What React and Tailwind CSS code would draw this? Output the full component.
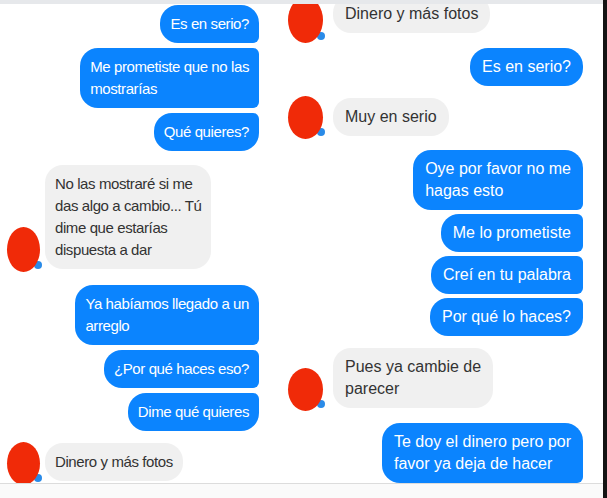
import React from 'react';

const corners = {
  solo: 'rounded-[18px]',
  first: 'rounded-[18px] rounded-br-[6px]',
  mid: 'rounded-l-[18px] rounded-r-[6px]',
  last: 'rounded-[18px] rounded-tr-[6px]',
};

function Lines({ lines }) {
  return lines.map((l, i) => (
    <React.Fragment key={i}>
      {i > 0 && <br />}
      {l}
    </React.Fragment>
  ));
}

function Sent({ lines, pos = 'solo', narrow }) {
  return (
    <div
      className={`w-fit whitespace-nowrap bg-[#0b84fe] text-white py-2 ${
        narrow ? 'px-[10px]' : 'px-3'
      } ${corners[pos]}`}
    >
      <Lines lines={lines} />
    </div>
  );
}

function Avatar({ className = '' }) {
  // red scribble over the profile picture, blue "active" dot peeking out
  return (
    <div className={`relative shrink-0 ${className}`}>
      <div className="absolute right-[-2px] bottom-[3px] w-[8px] h-[8px] rounded-full bg-[#2a8be8]" />
      <div className="absolute inset-0 rounded-[50%] bg-[#f02a08]" />
    </div>
  );
}

function Received({ lines, avatar, gap, narrow }) {
  return (
    <div className={`flex items-end ${gap}`}>
      <Avatar className={avatar} />
      <div
        className={`w-fit whitespace-nowrap bg-[#f0f0f0] text-[#333333] py-2 rounded-[18px] ${
          narrow ? 'px-[10px]' : 'px-3'
        }`}
      >
        <Lines lines={lines} />
      </div>
    </div>
  );
}

export default function App() {
  return (
    <div className="w-[607px] h-[498px] bg-white flex overflow-hidden font-['Liberation_Sans',Arial,sans-serif]">
      <div className="w-[603px] flex flex-col">
        <div className="h-[4px] bg-[#e6e8eb]" />

        <div className="h-[479px] flex overflow-hidden">
          {/* left screenshot */}
          <div className="w-[281px] flex flex-col pt-[1px] pl-[7px] pr-[22px] text-[15px] leading-[22px] tracking-[-0.4px]">
            <div className="flex flex-col items-end gap-[5px]">
              <Sent narrow pos="first" lines={['Es en serio?']} />
              <Sent narrow pos="mid" lines={['Me prometiste que no las', 'mostrarías']} />
              <Sent narrow pos="last" lines={['Qué quieres?']} />
            </div>
            <div className="mt-[14px]">
              <Received
                narrow
                gap="gap-[5px]"
                avatar="w-[33px] h-[45px] mb-[-3px]"
                lines={['No las mostraré si me', 'das algo a cambio... Tú', 'dime que estarías', 'dispuesta a dar']}
              />
            </div>
            <div className="mt-[16px] flex flex-col items-end gap-[5px]">
              <Sent narrow pos="first" lines={['Ya habíamos llegado a un', 'arreglo']} />
              <Sent narrow pos="mid" lines={['¿Por qué haces eso?']} />
              <Sent narrow pos="last" lines={['Dime qué quieres']} />
            </div>
            <div className="mt-[12px]">
              <Received
                narrow
                gap="gap-[5px]"
                avatar="w-[33px] h-[43px] mt-[-10px] mb-[-4px]"
                lines={['Dinero y más fotos']}
              />
            </div>
          </div>

          {/* right screenshot */}
          <div className="w-[322px] flex flex-col mt-[-9px] pl-[7px] pr-[20px] text-[16px] leading-[22px]">
            <Received
              gap="gap-[10px]"
              avatar="w-[35px] h-[46px] mt-[-10px] mb-[-10px]"
              lines={['Dinero y más fotos']}
            />
            <div className="mt-[15px] flex flex-col items-end">
              <Sent lines={['Es en serio?']} />
            </div>
            <div className="mt-[12px]">
              <Received
                gap="gap-[10px]"
                avatar="w-[35px] h-[43px] mt-[-10px] mb-[-3px]"
                lines={['Muy en serio']}
              />
            </div>
            <div className="mt-[14px] flex flex-col items-end gap-[4px]">
              <Sent pos="first" lines={['Oye por favor no me', 'hagas esto']} />
              <Sent pos="mid" lines={['Me lo prometiste']} />
              <Sent pos="mid" lines={['Creí en tu palabra']} />
              <Sent pos="last" lines={['Por qué lo haces?']} />
            </div>
            <div className="mt-[12px]">
              <Received
                gap="gap-[10px]"
                avatar="w-[35px] h-[43px] mb-[-3px]"
                lines={['Pues ya cambie de', 'parecer']}
              />
            </div>
            <div className="mt-[15px] flex flex-col items-end">
              <Sent pos="first" lines={['Te doy el dinero pero por', 'favor ya deja de hacer']} />
            </div>
          </div>
        </div>

        <div className="flex-1 border-t border-[#dcdcdc] bg-[#fafafa]" />
      </div>
      <div className="w-[4px] bg-[#141414]" />
    </div>
  );
}
